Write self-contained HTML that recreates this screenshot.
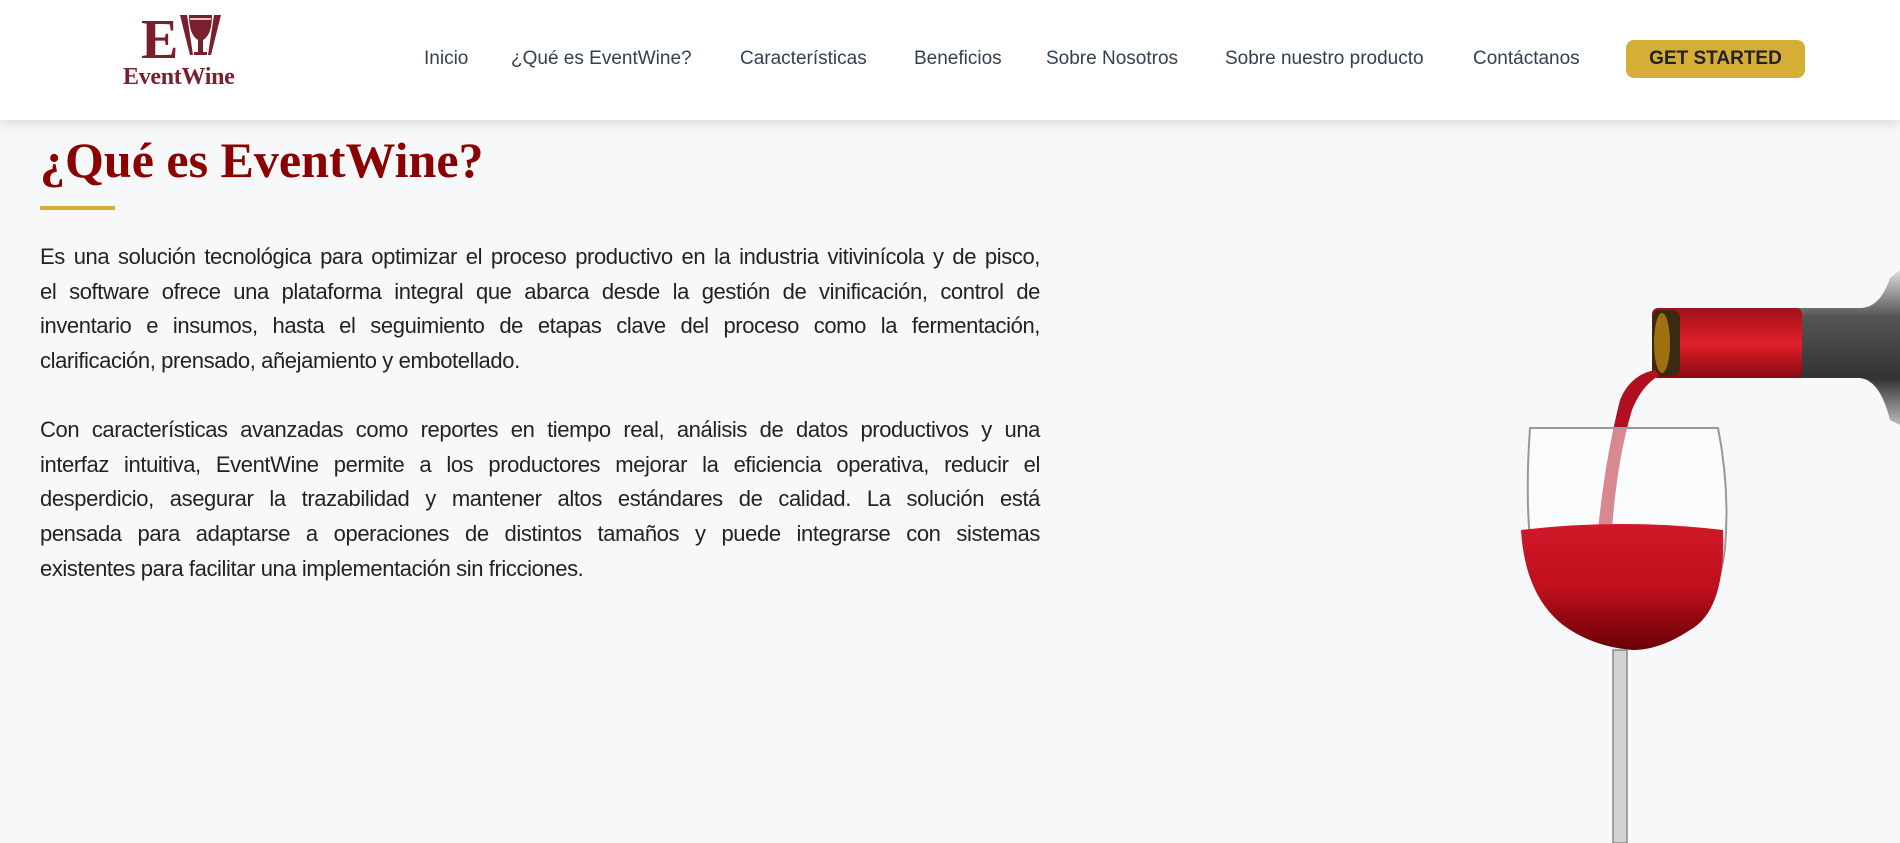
<!DOCTYPE html>
<html><head><meta charset="utf-8"><style>
*{margin:0;padding:0;box-sizing:border-box}
body{width:1900px;height:843px;overflow:hidden;background:#f7f8fa;font-family:"Liberation Sans",Arial,sans-serif;position:relative}
header{position:absolute;left:0;top:0;width:1900px;height:120px;background:#fff;box-shadow:0 4px 12px rgba(0,0,0,.12);z-index:2}
.nav a{position:absolute;top:47px;font-size:19px;color:#33404f;text-decoration:none;white-space:nowrap;line-height:24px}
.btn{position:absolute;left:1626px;top:40px;width:179px;height:38px;background:#d4ae37;border-radius:8px;color:#222;font-weight:bold;font-size:19px;text-align:center;line-height:38px}
h1{position:absolute;left:40px;top:131px;font-family:"Liberation Serif",serif;font-weight:bold;font-size:50px;color:#8b0000;white-space:nowrap}
.bar{position:absolute;left:40px;top:206px;width:75px;height:4px;background:#d4ae37}
.p{position:absolute;left:40px;width:1000px;font-size:22px;letter-spacing:-0.4px;line-height:34.7px;color:#222}
.p div{white-space:nowrap;text-align:justify;text-align-last:justify}
.p div.l{text-align-last:left}
</style></head><body>
<header>
<svg style="position:absolute;left:140px;top:12px" width="84" height="50" viewBox="0 0 84 50">
<text x="1" y="46" font-family="Liberation Serif,serif" font-weight="bold" font-size="56" fill="#7a1f2e">E</text>
<path d="M40 3h7l6 40h-3z M81 3h-7l-6 40h3z" fill="#7a1f2e"/>
<path d="M49 3h23q0 20-9 25v12h4v3h-13v-3h4v-12q-9-5-9-25z" fill="#7a1f2e"/>
<path d="M50 7h21" stroke="#fff" stroke-width="1.5"/>
</svg>
<div style="position:absolute;left:123px;top:64px;font-family:'Liberation Serif',serif;font-weight:bold;font-size:24px;color:#7a1f2e;letter-spacing:-0.3px">EventWine</div>
<div class="nav">
<a style="left:424px">Inicio</a>
<a style="left:511px">¿Qué es EventWine?</a>
<a style="left:740px">Características</a>
<a style="left:914px">Beneficios</a>
<a style="left:1046px">Sobre Nosotros</a>
<a style="left:1225px">Sobre nuestro producto</a>
<a style="left:1473px">Contáctanos</a>
</div>
<div class="btn">GET STARTED</div>
</header>
<h1>¿Qué es EventWine?</h1>
<div class="bar"></div>
<div class="p" style="top:240px">
<div>Es una solución tecnológica para optimizar el proceso productivo en la industria vitivinícola y de pisco,</div>
<div>el software ofrece una plataforma integral que abarca desde la gestión de vinificación, control de</div>
<div>inventario e insumos, hasta el seguimiento de etapas clave del proceso como la fermentación,</div>
<div class="l">clarificación, prensado, añejamiento y embotellado.</div>
</div>
<div class="p" style="top:413px">
<div>Con características avanzadas como reportes en tiempo real, análisis de datos productivos y una</div>
<div>interfaz intuitiva, EventWine permite a los productores mejorar la eficiencia operativa, reducir el</div>
<div>desperdicio, asegurar la trazabilidad y mantener altos estándares de calidad. La solución está</div>
<div>pensada para adaptarse a operaciones de distintos tamaños y puede integrarse con sistemas</div>
<div class="l">existentes para facilitar una implementación sin fricciones.</div>
</div>
<svg style="position:absolute;left:0;top:0" width="1900" height="843" viewBox="0 0 1900 843">
<defs>
<linearGradient id="bot" x1="0" y1="0" x2="0" y2="1"><stop offset="0" stop-color="#ddd"/><stop offset=".3" stop-color="#555"/><stop offset=".7" stop-color="#333"/><stop offset="1" stop-color="#bbb"/></linearGradient>
<linearGradient id="cap" x1="0" y1="0" x2="0" y2="1"><stop offset="0" stop-color="#a0101a"/><stop offset=".5" stop-color="#e0202a"/><stop offset="1" stop-color="#8a0a12"/></linearGradient>
<linearGradient id="wine" x1="0" y1="0" x2="0" y2="1"><stop offset="0" stop-color="#d01828"/><stop offset=".5" stop-color="#c0101c"/><stop offset="1" stop-color="#6a0008"/></linearGradient>
</defs>
<path d="M1790 308h70q20 0 30-30l10-8v155l-10-5q-10-40-30-42h-70z" fill="url(#bot)"/>
<rect x="1652" y="308" width="150" height="70" rx="6" fill="url(#cap)"/>
<rect x="1652" y="310" width="28" height="66" rx="8" fill="#3a2a10"/>
<ellipse cx="1662" cy="343" rx="8" ry="30" fill="#a07010"/>
<path d="M1655 370q-25 5-35 30q-15 60-22 130l14 0q5-70 20-120q10-25 28-35z" fill="#b01020"/>
<path d="M1530 428h188q12 60 7 120q-10 90-92 100q-85-10-102-100q-6-50-1-120z" fill="#fff" fill-opacity=".5" stroke="#999" stroke-width="2"/>
<path d="M1521 530q100-12 202 0q3 80-33 100q-30 20-57 20q-40-3-70-25q-38-30-42-95z" fill="url(#wine)"/>
<rect x="1613" y="650" width="14" height="193" fill="#d4d4d4" stroke="#888" stroke-width="1.5"/>
</svg>
</body></html>
